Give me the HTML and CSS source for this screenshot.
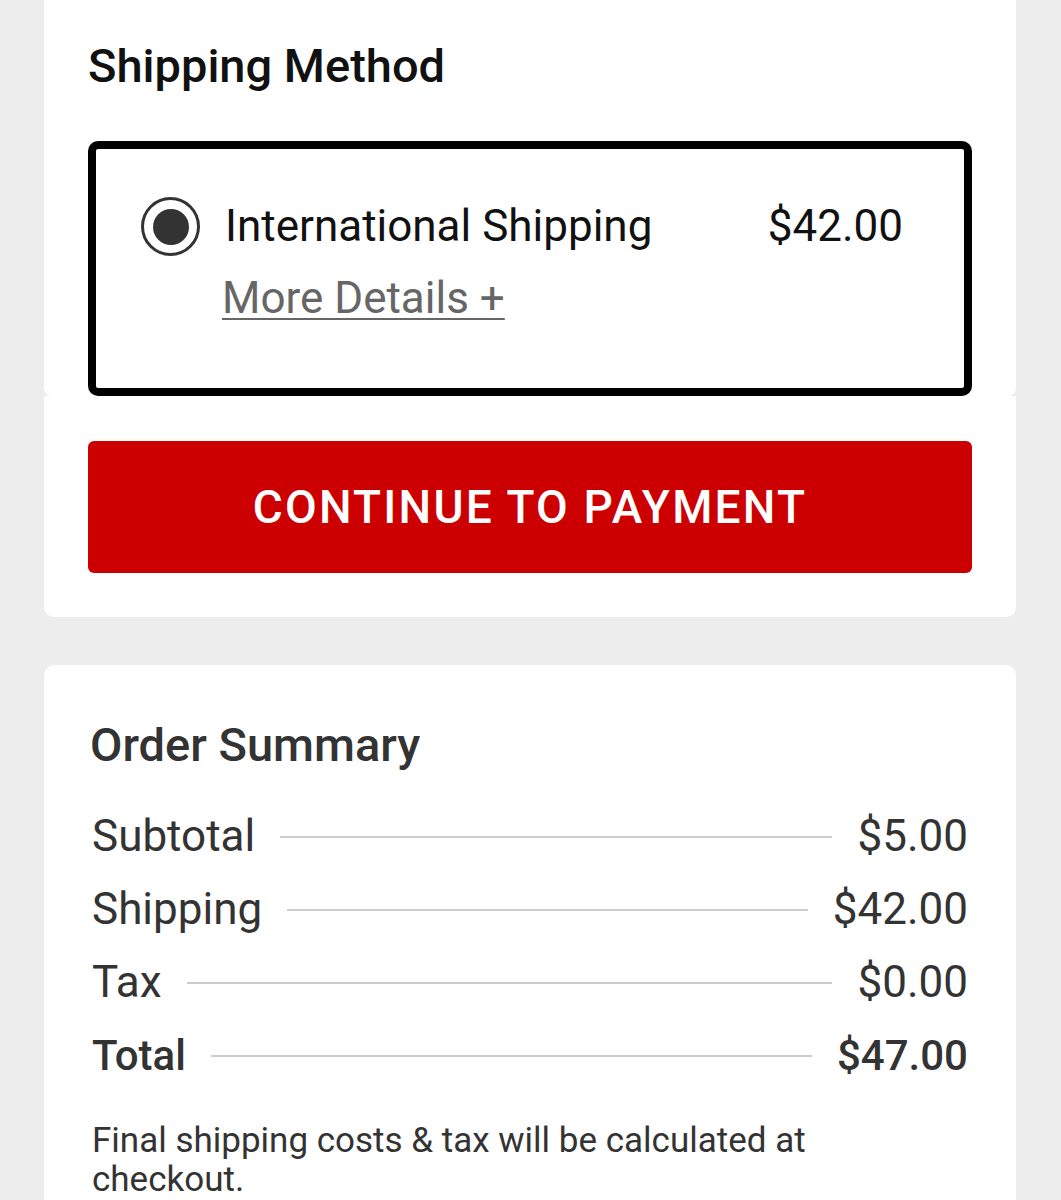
FILE: index.html
```html
<!DOCTYPE html>
<html lang="en">
<head>
  <meta charset="UTF-8">
  <title>Checkout</title>
  <link rel="stylesheet" href="styles.css">
</head>
<body>
<div class="page">
  <div class="card card-shipping">
    <div class="shipping-top">
      <h2 class="title">Shipping Method</h2>
      <div class="option">
        <span class="radio"><span class="radio-dot"></span></span>
        <div class="option-body">
          <div class="option-row">
            <span class="option-name">International Shipping</span>
            <span class="option-price">$42.00</span>
          </div>
          <a class="more" href="#">More Details +</a>
        </div>
      </div>
    </div>
    <div class="shipping-bottom">
      <button class="btn-pay">CONTINUE TO PAYMENT</button>
    </div>
  </div>

  <div class="card summary">
    <h2 class="title title-dark">Order Summary</h2>
    <ul class="rows">
      <li><span>Subtotal</span><i class="leader"></i><span>$5.00</span></li>
      <li><span>Shipping</span><i class="leader"></i><span>$42.00</span></li>
      <li><span>Tax</span><i class="leader"></i><span>$0.00</span></li>
      <li class="total"><span>Total</span><i class="leader"></i><span>$47.00</span></li>
    </ul>
    <p class="note">Final shipping costs &amp; tax will be calculated at checkout.</p>
  </div>
</div>
</body>
</html>
```

FILE: styles.css
```css
* {
  padding: 0;
  margin: 0;
  box-sizing: border-box;
  list-style: none;
}

body {
  background: #ededed;
  font-family: Roboto, "Liberation Sans", sans-serif;
  color: #111;
}

.page {
  width: 972px;
  margin-left: 44px;
}

.card {
  background: #fff;
}

.card-shipping {
  background: transparent;
}

.shipping-top {
  background: #fff;
  padding: 38px 0 0;
  border-radius: 0 0 8px 8px;
}

.shipping-bottom {
  background: #fff;
  padding: 45px 44px 44px;
  border-radius: 0 0 10px 10px;
}

.shipping-top .title {
  margin-left: 44px;
}

.title {
  font-size: 47px;
  font-weight: 500;
  line-height: 55px;
  color: #111;
}

.title-dark {
  color: #333;
}

.option {
  display: flex;
  margin: 48px 44px 0;
  border: 8px solid #000;
  border-radius: 10px;
  padding: 51px 61px 64px 45px;
}

.radio {
  width: 59px;
  height: 59px;
  border: 3px solid #333;
  border-radius: 50%;
  display: flex;
  align-items: center;
  justify-content: center;
  margin-top: -3px;
  flex-shrink: 0;
}

.radio-dot {
  width: 36px;
  height: 36px;
  border-radius: 50%;
  background: #333;
}

.option-body {
  flex: 1;
  margin-left: 25px;
}

.option-row {
  display: flex;
  justify-content: space-between;
  font-size: 44px;
  line-height: 52px;
}

.more {
  display: inline-block;
  margin-top: 20px;
  margin-left: -3px;
  font-size: 44px;
  line-height: 52px;
  color: #666;
  text-decoration: underline;
  text-decoration-thickness: 2px;
  text-underline-offset: 5px;
}

.btn-pay {
  display: block;
  width: 100%;
  height: 132px;
  border: 0;
  border-radius: 6px;
  background: #cc0000;
  color: #fff;
  font-family: Roboto, "Liberation Sans", sans-serif;
  font-size: 46px;
  font-weight: 500;
  letter-spacing: 2.2px;
}

.summary {
  margin-top: 48px;
  border-radius: 10px;
  padding: 52px 48px 40px 46px;
}

.rows {
  margin-top: 28px;
  margin-left: 2px;
}

.rows li {
  display: flex;
  align-items: center;
  font-size: 44px;
  line-height: 73px;
  color: #333;
}

.rows .leader {
  flex: 1;
  height: 2px;
  background: #ccc;
  margin: 0 25px;
}

.rows .total {
  font-size: 42px;
  font-weight: 500;
}

.note {
  margin: 29px 90px 0 2px;
  font-size: 35px;
  line-height: 39px;
  color: #333;
}
```
